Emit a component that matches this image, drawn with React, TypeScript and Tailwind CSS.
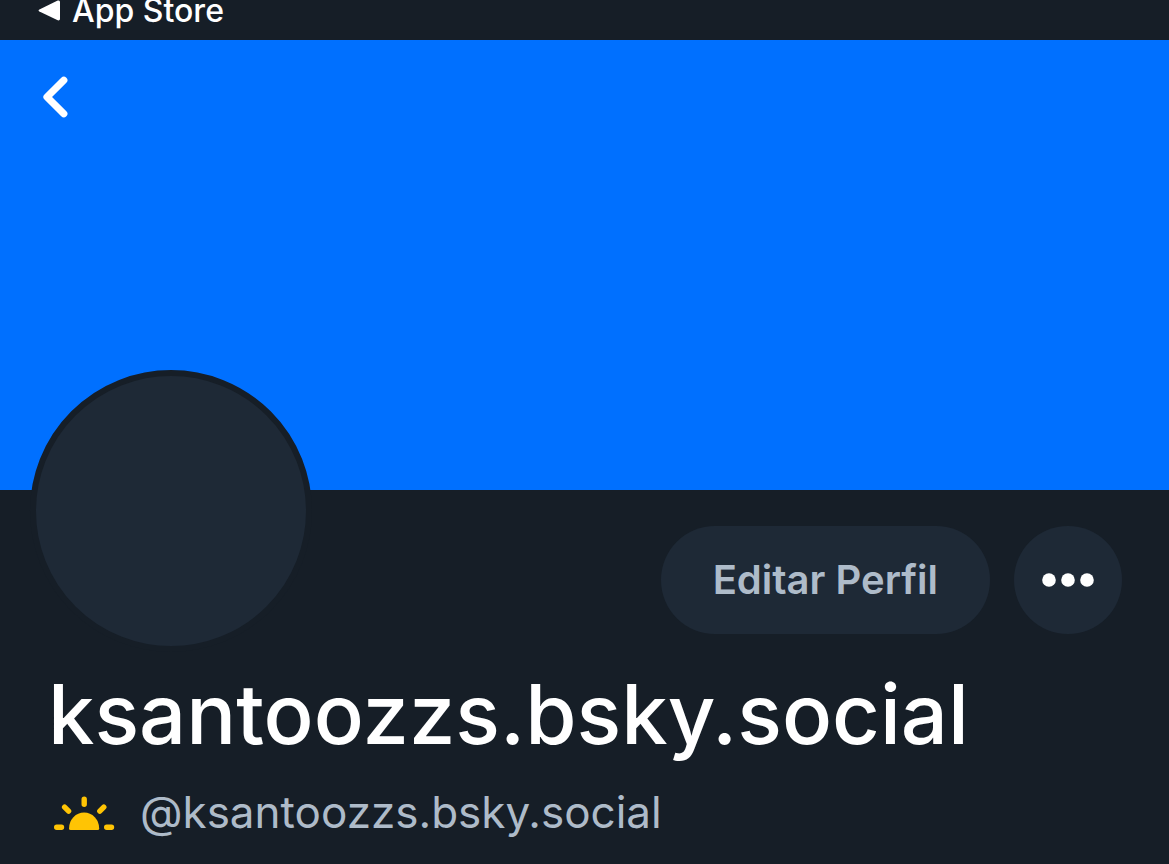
import React from "react";

const profile = {
  name: "ksantoozzs.bsky.social",
  handle: "@ksantoozzs.bsky.social",
};

function StatusBar() {
  return (
    <header className="flex h-10 items-start pl-9">
      <a href="#app-store" className="flex items-center gap-3 text-[32px] font-medium leading-[22px] text-white">
        <svg width="24" height="22" viewBox="0 0 24 22" fill="currentColor" aria-hidden="true">
          <path d="M3.4 9.6 21.2 .7C22.7 0 24 .6 24 2.1V18.8C24 20.3 22.7 20.8 21.2 20.1L3.4 11.6C2.3 11 2.3 10.2 3.4 9.6Z" />
        </svg>
        App Store
      </a>
    </header>
  );
}

function Banner() {
  return (
    <div className="h-[450px] bg-[#0070ff] px-9 pt-8">
      <button type="button" aria-label="Voltar" className="block cursor-pointer text-white">
        <svg width="40" height="50" viewBox="0 0 40 50" fill="none" stroke="currentColor" strokeWidth="7.2" strokeLinecap="round" strokeLinejoin="round">
          <path d="M27.8 8.2 11 25 27.8 41.8" />
        </svg>
      </button>
    </div>
  );
}

function SunIcon() {
  return (
    <svg width="64" height="36" viewBox="0 0 64 36" aria-hidden="true">
      <path d="M17 34.4a15.1 15.9 0 0 1 30.2 0q0 1.6-1.6 1.6H18.6q-1.6 0-1.6-1.6Z" fill="#ffc404" />
      <g stroke="#ffc404" strokeWidth="5.4" strokeLinecap="round">
        <path d="M4.7 33.2h4.8M54.7 33.2h4.8M32.2 5.2v5M12.6 13.2l4 4M51.8 13.2l-4 4" />
      </g>
    </svg>
  );
}

export default function App() {
  return (
    <div className="min-h-screen bg-[#161e27] font-['Inter',sans-serif]">
      <StatusBar />
      <main>
        <Banner />

        {/* Avatar and actions */}
        <div className="flex items-start justify-between pl-[30px] pr-[47px]">
          <div className="-mt-[120px] size-[282px] shrink-0 rounded-full border-6 border-[#161e27] bg-[#1e2936]" />
          <div className="flex gap-6 pt-9">
            <button type="button" className="h-[108px] cursor-pointer rounded-full bg-[#1e2936] px-[52px] text-[40px] font-semibold text-[#aebbc9]">
              Editar Perfil
            </button>
            <button type="button" aria-label="Mais opções" className="flex size-[108px] cursor-pointer items-center justify-center rounded-full bg-[#1e2936] text-white">
              <svg width="54" height="16" viewBox="0 0 54 16" fill="currentColor">
                <circle cx="8" cy="8" r="6.8" />
                <circle cx="27" cy="8" r="6.8" />
                <circle cx="46" cy="8" r="6.8" />
              </svg>
            </button>
          </div>
        </div>

        {/* Name and handle */}
        <div className="px-12 pt-3">
          <h1 className="text-[83px] font-medium leading-[100px] text-white">{profile.name}</h1>
          <div className="mt-5 flex items-center gap-6 pl-1">
            <SunIcon />
            <p className="text-[44px] leading-[56px] text-[#aebbc9]">{profile.handle}</p>
          </div>
        </div>
      </main>
    </div>
  );
}
